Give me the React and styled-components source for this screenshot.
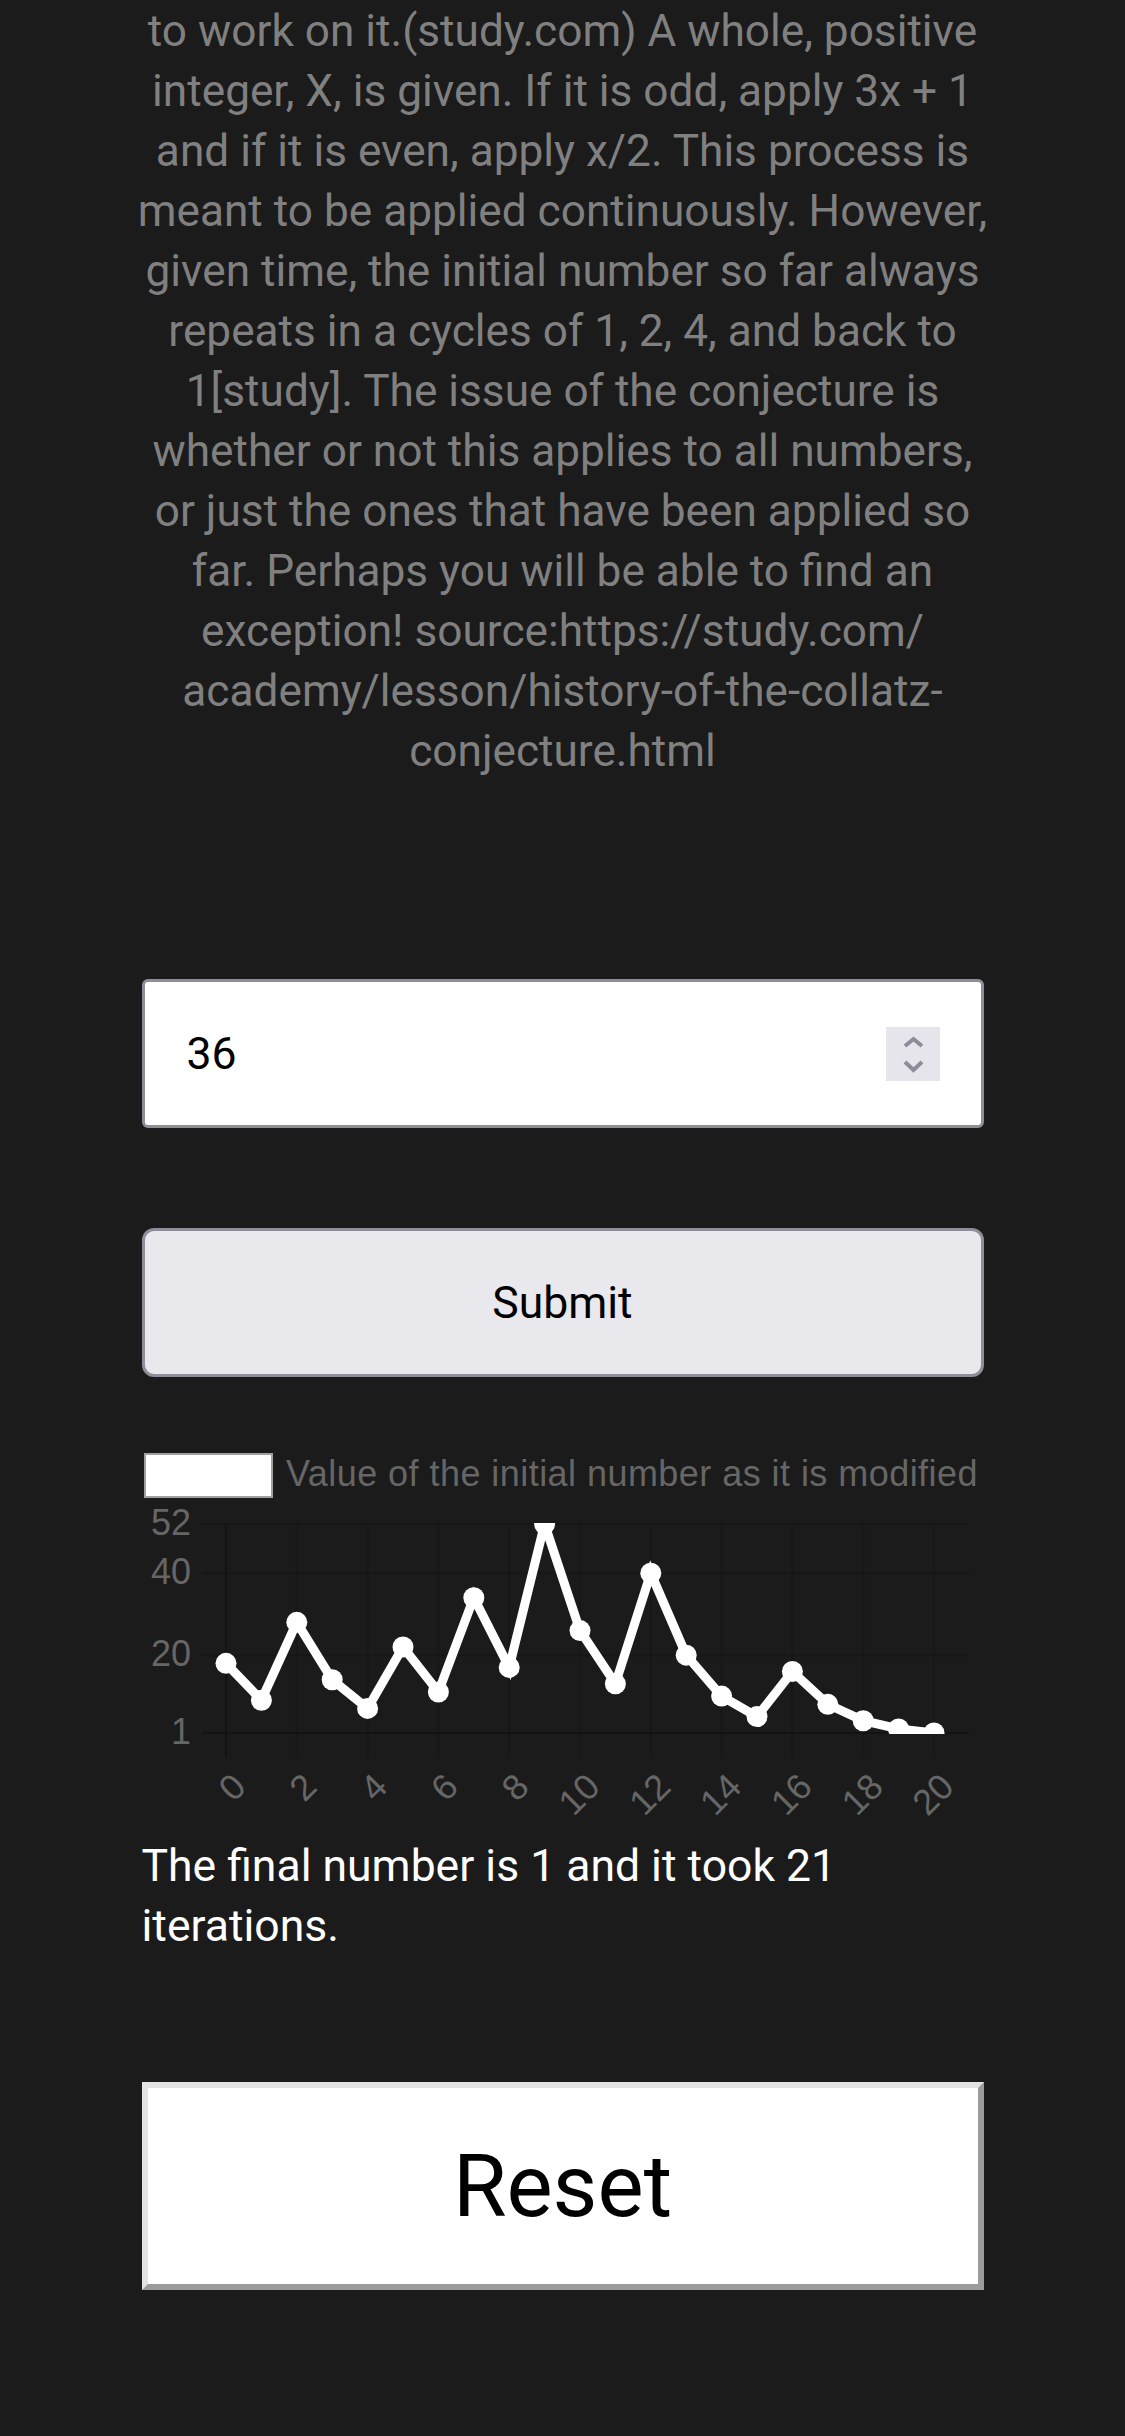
import React from 'react';
import styled, { createGlobalStyle } from 'styled-components';

const GlobalStyle = createGlobalStyle`
html, body {
    margin: 0;
    padding: 0;
    background: #1b1b1b;
}
`;

const Page = styled.div`
width: 842px;
margin: 0 auto;
display: flex;
flex-direction: column;
padding-bottom: 147px;
font-family: Roboto, 'Liberation Sans', sans-serif;
`;

const Intro = styled.p`
width: 860px;
margin: 0 -9px;
padding-top: 1px;
font-size: 44.2px;
line-height: 60px;
color: #808080;
text-align: center;
`;

const NumberField = styled.div`
margin-top: 198px;
height: 149px;
box-sizing: border-box;
border: 3px solid #8f8d99;
border-radius: 6px;
background: #fff;
display: flex;
align-items: center;
justify-content: space-between;
padding: 0 41px 0 42px;
`;

const Value = styled.span`
font-size: 44.5px;
color: #000;
`;

const Spinner = styled.div`
width: 54px;
height: 54px;
background: #e6e5eb;
svg {
    display: block;
}
`;

const SubmitButton = styled.button`
margin-top: 100px;
height: 149px;
box-sizing: border-box;
border: 3px solid #8f8d99;
border-radius: 12px;
background: #e9e8ed;
font-family: Roboto, sans-serif;
font-size: 44.5px;
color: #000;
padding: 0;
`;

const ChartWrap = styled.div`
margin-top: 64px;
height: 395px;
svg {
    display: block;
}
`;

const Result = styled.p`
margin: 0;
font-size: 44.5px;
line-height: 60px;
color: #fff;
`;

const ResetButton = styled.button`
margin-top: 126px;
height: 208px;
box-sizing: border-box;
border-width: 6px;
border-style: solid;
border-color: #e3e3e3 #9b9b9b #9b9b9b #e3e3e3;
background: #fff;
font-family: Roboto, sans-serif;
font-size: 87px;
color: #000;
padding: 0;
`;

const data = [18, 9, 28, 14, 7, 22, 11, 34, 17, 52, 26, 13, 40, 20, 10, 5, 16, 8, 4, 2, 1];

const xOf = (i) => 84 + 35.4 * i;
const yOf = (v) => 292 - (v - 1) * 4.098;

const Chart = () => {
    const line = data.map((v, i) => `${xOf(i)},${yOf(v)}`).join(' ');
    const ticks = [];
    for (let i = 0; i <= 20; i += 2) ticks.push(i);
    return (
        <svg width="842" height="395" viewBox="0 0 842 395">
            <defs>
                <clipPath id="plot">
                    <rect x="0" y="82" width="842" height="211" />
                </clipPath>
            </defs>
            <rect x="3" y="13" width="127" height="43" fill="#fff" stroke="#a0a0a0" strokeWidth="2" />
            <text x="144" y="45" fontFamily="'Liberation Sans', Arial, sans-serif" fontSize="36" letterSpacing="0.45" fill="#666">
                Value of the initial number as it is modified
            </text>
            {ticks.map((i) => (
                <line key={'v' + i} x1={xOf(i)} x2={xOf(i)} y1="83" y2="316" stroke={i === 0 ? '#131313' : '#171717'} strokeWidth="2" />
            ))}
            {[52, 40, 20, 1].map((v) => (
                <g key={'h' + v}>
                    <line x1="60" x2="827" y1={yOf(v)} y2={yOf(v)} stroke={v === 1 ? '#131313' : '#171717'} strokeWidth="2" />
                    <text x="49" y={yOf(v) + 11} textAnchor="end" fontFamily="'Liberation Sans', Arial, sans-serif" fontSize="36" fill="#666">{v}</text>
                </g>
            ))}
            {ticks.map((i) => (
                <text
                    key={'t' + i}
                    transform={`translate(${xOf(i) + 13} 339) rotate(-45)`}
                    textAnchor="end"
                    dominantBaseline="central"
                    fontFamily="'Liberation Sans', Arial, sans-serif"
                    fontSize="36"
                    fill="#666"
                >
                    {i}
                </text>
            ))}
            <g clipPath="url(#plot)">
                <polyline points={line} fill="none" stroke="#fff" strokeWidth="9" strokeLinejoin="miter" />
                {data.map((v, i) => (
                    <circle key={'p' + i} cx={xOf(i)} cy={yOf(v)} r="10.5" fill="#fff" />
                ))}
            </g>
        </svg>
    );
};

const App = () => {
    return (
        <Page>
            <GlobalStyle />
            <Intro>
                to work on it.(study.com) A whole, positive integer, X, is given. If it is odd, apply 3x + 1 and if it is even, apply x/2. This process is meant to be applied continuously. However, given time, the initial number so far always repeats in a cycles of 1, 2, 4, and back to 1[study]. The issue of the conjecture is whether or not this applies to all numbers, or just the ones that have been applied so far. Perhaps you will be able to find an exception! source:https://study.com/<wbr />academy/<wbr />lesson/<wbr />history-of-the-collatz-<wbr />conjecture.html
            </Intro>
            <NumberField>
                <Value>36</Value>
                <Spinner>
                    <svg width="54" height="54" viewBox="0 0 54 54">
                        <polyline points="19,19 27.5,12 36,19" fill="none" stroke="#8e8c98" strokeWidth="4" />
                        <polyline points="19,35 27.5,43 36,35" fill="none" stroke="#8e8c98" strokeWidth="4" />
                    </svg>
                </Spinner>
            </NumberField>
            <SubmitButton>Submit</SubmitButton>
            <ChartWrap>
                <Chart />
            </ChartWrap>
            <Result>The final number is 1 and it took 21 iterations.</Result>
            <ResetButton>Reset</ResetButton>
        </Page>
    );
};

export default App;
